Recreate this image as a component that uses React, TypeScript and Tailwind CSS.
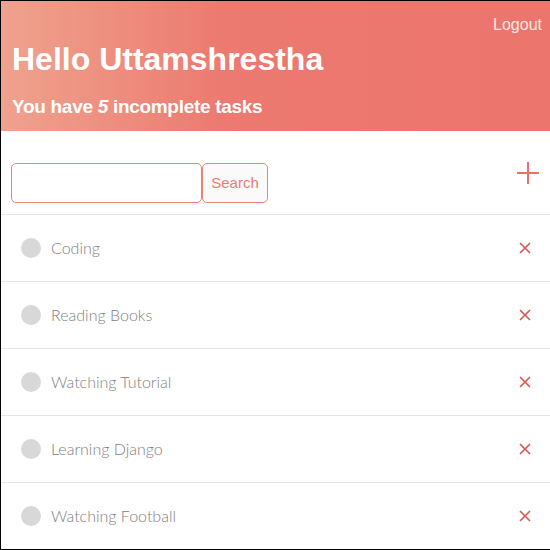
const tasks = ["Coding", "Reading Books", "Watching Tutorial", "Learning Django", "Watching Football"]

export default function App() {
  return (
    <div className="h-[550px] w-[550px] overflow-hidden border-t border-b border-l border-black bg-white">
      <div className="h-[130px] bg-gradient-to-r from-[#efa28e] via-[#ec7a70] via-40% to-[#ec756e] pl-[11px] pr-2 pt-3 font-['Liberation_Sans',Arial,sans-serif] text-white">
        <div className="flex justify-end">
          <button className="text-[16px] font-light text-[#fde8e2]">Logout</button>
        </div>
        <h1 className="mt-[2px] text-[32px] font-bold leading-[40px]">Hello Uttamshrestha</h1>
        <h3 className="mt-[16px] text-[19px] font-bold leading-[24px] tracking-[-0.3px]">
          You have <i>5</i> incomplete tasks
        </h3>
      </div>

      <div className="flex h-[84px] items-start border-b border-[#e5e5e5] px-[10px] pt-[32px]">
        <div className="flex">
          <input className="h-[40px] w-[191px] rounded-[5px] border border-[#ee8277] outline-none" />
          <button className="h-[40px] w-[66px] rounded-[5px] border border-[#ee8277] bg-[#fafafa] font-['Liberation_Sans',Arial,sans-serif] text-[15px] text-[#ee7a70]">
            Search
          </button>
        </div>
        <button className="ml-auto mt-[-10px] flex h-[40px] w-[24px] items-center justify-center">
          <svg width="24" height="24" viewBox="0 0 24 24" stroke="#e97066" strokeWidth="2" fill="none">
            <path d="M12 1v22M1 12h22" />
          </svg>
        </button>
      </div>

      {tasks.map((t) => (
        <div key={t} className="flex h-[67px] items-center border-b border-[#e5e5e5] pl-5 pr-[19px] font-['Lato',sans-serif]">
          <span className="h-5 w-5 rounded-full bg-[#d8d8d8]" />
          <span className="ml-[10px] text-[16px] font-light text-[#808080]">{t}</span>
          <button className="ml-auto">
            <svg width="12" height="12" viewBox="0 0 12 12" stroke="#d9534f" strokeWidth="1.6" fill="none">
              <path d="M1 1l10 10M11 1L1 11" />
            </svg>
          </button>
        </div>
      ))}
    </div>
  )
}
